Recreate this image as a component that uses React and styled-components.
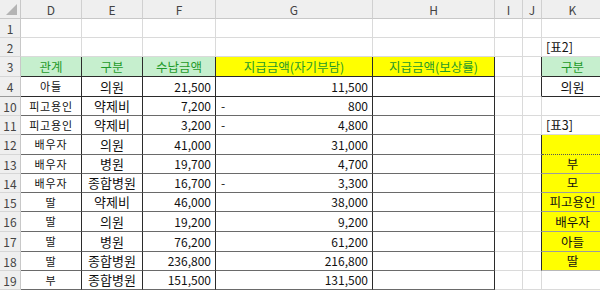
import React from "react";
import styled, { createGlobalStyle } from "styled-components";

const GlobalStyle = createGlobalStyle`
  html, body {
    margin: 0;
    padding: 0;
    background: #ffffff;
    overflow: hidden;
  }
  body {
    font-family: "Noto Sans CJK KR", "Noto Sans", sans-serif;
  }
`;

const GRID = "#dadada";
const DARK = "#2b2b2b";
const MID = "#6a6a6a";

const COLS = ["D", "E", "F", "G", "H", "I", "J", "K"];
const WIDTHS = [61, 61, 73, 157, 122, 28, 19, 62];

const Sheet = styled.div`
  display: grid;
  grid-template-columns: 21px ${WIDTHS.map(w => `${w}px`).join(" ")};
  width: 604px;
  font-size: 12px;
  color: #111;
`;

const Corner = styled.div`
  position: relative;
  height: 19px;
  box-sizing: border-box;
  background: #efefef;
  border-right: 1px solid #c8c8c8;
  border-bottom: 1px solid #c8c8c8;

  &::after {
    content: "";
    position: absolute;
    right: 3px;
    bottom: 3px;
    border-left: 11px solid transparent;
    border-bottom: 11px solid #b4b4b4;
  }
`;

const ColHead = styled.div`
  height: 19px;
  box-sizing: border-box;
  display: flex;
  align-items: center;
  justify-content: center;
  background: #efefef;
  color: #444;
  font-size: 12px;
  border-right: 1px solid #d0d0d0;
  border-bottom: 1px solid #c8c8c8;
`;

const RowHead = styled.div`
  height: ${p => p.$h}px;
  box-sizing: border-box;
  display: flex;
  align-items: center;
  justify-content: center;
  background: #efefef;
  color: #444;
  font-size: 12px;
  border-right: 1px solid #c8c8c8;
  border-bottom: 1px solid ${p => (p.$double ? "#9a9a9a" : "#d6d6d6")};
`;

const Cell = styled.div`
  height: ${p => p.$h}px;
  box-sizing: border-box;
  display: flex;
  align-items: center;
  justify-content: ${p => p.$align || "center"};
  padding: 0 ${p => (p.$tight ? 0 : 4)}px 1px;
  background: ${p => p.$bg || "transparent"};
  color: ${p => p.$color || "#111"};
  font-size: ${p => p.$size || 12}px;
  letter-spacing: ${p => p.$spacing || 0}px;
  white-space: nowrap;
  border-right: 1px solid ${p => p.$right || GRID};
  border-bottom: 1px ${p => p.$bstyle || "solid"} ${p => p.$bottom || GRID};
`;

const Dash = styled.span`
  padding-left: 1px;
`;

const GREEN_BG = "#c6efce";
const GREEN_TX = "#1f9a2a";
const YELLOW = "#ffff00";

const rows = [
  { n: "1", h: 19 },
  { n: "2", h: 19, k: "[표2]" },
  { n: "3", h: 20, head: true },
  { n: "4", h: 20, d: "아들", e: "의원", f: "21,500", g: "11,500", k: "의원", double: true },
  { n: "10", h: 19, d: "피고용인", e: "약제비", f: "7,200", g: "800", neg: true },
  { n: "11", h: 19, d: "피고용인", e: "약제비", f: "3,200", g: "4,800", neg: true, k: "[표3]" },
  { n: "12", h: 20, d: "배우자", e: "의원", f: "41,000", g: "31,000", yellow: "" },
  { n: "13", h: 19, d: "배우자", e: "병원", f: "19,700", g: "4,700", yellow: "부" },
  { n: "14", h: 19, d: "배우자", e: "종합병원", f: "16,700", g: "3,300", neg: true, yellow: "모" },
  { n: "15", h: 19, d: "딸", e: "약제비", f: "46,000", g: "38,000", yellow: "피고용인" },
  { n: "16", h: 20, d: "딸", e: "의원", f: "19,200", g: "9,200", yellow: "배우자" },
  { n: "17", h: 20, d: "딸", e: "병원", f: "76,200", g: "61,200", yellow: "아들" },
  { n: "18", h: 19, d: "딸", e: "종합병원", f: "236,800", g: "216,800", yellow: "딸" },
  { n: "19", h: 19, d: "부", e: "종합병원", f: "151,500", g: "131,500" },
];

const headers = ["관계", "구분", "수납금액", "지급금액(자기부담)", "지급금액(보상률)"];

function renderRow(r, idx) {
  const h = r.h;
  const inTable = idx >= 2;
  const tb = inTable ? (r.head || r.double ? DARK : MID) : GRID;
  const tr = inTable ? DARK : GRID;
  const cells = [];

  if (r.head) {
    headers.forEach((t, i) => {
      cells.push(
        <Cell
          key={`h${i}`}
          $h={h}
          $bg={i < 3 ? GREEN_BG : YELLOW}
          $color={GREEN_TX}
          $size={12.5}
          $right={tr}
          $bottom={tb}
        >
          {t}
        </Cell>
      );
    });
  } else if (inTable) {
    cells.push(
      <Cell key="d" $h={h} $size={11} $spacing={0.8} $right={tr} $bottom={tb}>
        {r.d}
      </Cell>,
      <Cell key="e" $h={h} $size={13} $right={tr} $bottom={tb}>
        {r.e}
      </Cell>,
      <Cell key="f" $h={h} $align="flex-end" $right={tr} $bottom={tb}>
        {r.f}
      </Cell>,
      <Cell
        key="g"
        $h={h}
        $align={r.neg ? "space-between" : "flex-end"}
        $right={tr}
        $bottom={tb}
      >
        {r.neg && <Dash>-</Dash>}
        {r.g}
      </Cell>,
      <Cell key="h" $h={h} $right={tr} $bottom={tb} />
    );
  } else {
    for (let i = 0; i < 5; i++) cells.push(<Cell key={`b${i}`} $h={h} />);
  }

  const kTable = r.head || r.n === "4" || r.yellow !== undefined;
  cells.push(<Cell key="i" $h={h} />);
  cells.push(<Cell key="j" $h={h} $right={kTable ? DARK : GRID} />);

  if (r.head) {
    cells.push(
      <Cell key="k" $h={h} $tight $bg={GREEN_BG} $color={GREEN_TX} $size={12.5} $bottom={DARK}>
        구분
      </Cell>
    );
  } else if (r.n === "4") {
    cells.push(
      <Cell key="k" $h={h} $tight $size={13} $bottom={DARK}>
        {r.k}
      </Cell>
    );
  } else if (r.yellow !== undefined) {
    const bottom = r.n === "12" ? "#555" : r.n === "18" ? "#b8b8b8" : "#9c9c9c";
    cells.push(
      <Cell
        key="k"
        $h={h}
        $tight
        $bg={YELLOW}
        $size={12.5}
        $bottom={bottom}
        $bstyle={r.n === "12" ? "dotted" : "solid"}
      >
        {r.yellow}
      </Cell>
    );
  } else {
    cells.push(
      <Cell key="k" $h={h} $align="flex-start" $size={12.5}>
        {r.k}
      </Cell>
    );
  }

  return (
    <React.Fragment key={r.n}>
      <RowHead $h={h} $double={r.double}>
        {r.n}
      </RowHead>
      {cells}
    </React.Fragment>
  );
}

export default function App() {
  return (
    <>
      <GlobalStyle />
      <Sheet>
        <Corner />
        {COLS.map(c => (
          <ColHead key={c}>{c}</ColHead>
        ))}
        {rows.map(renderRow)}
      </Sheet>
    </>
  );
}
